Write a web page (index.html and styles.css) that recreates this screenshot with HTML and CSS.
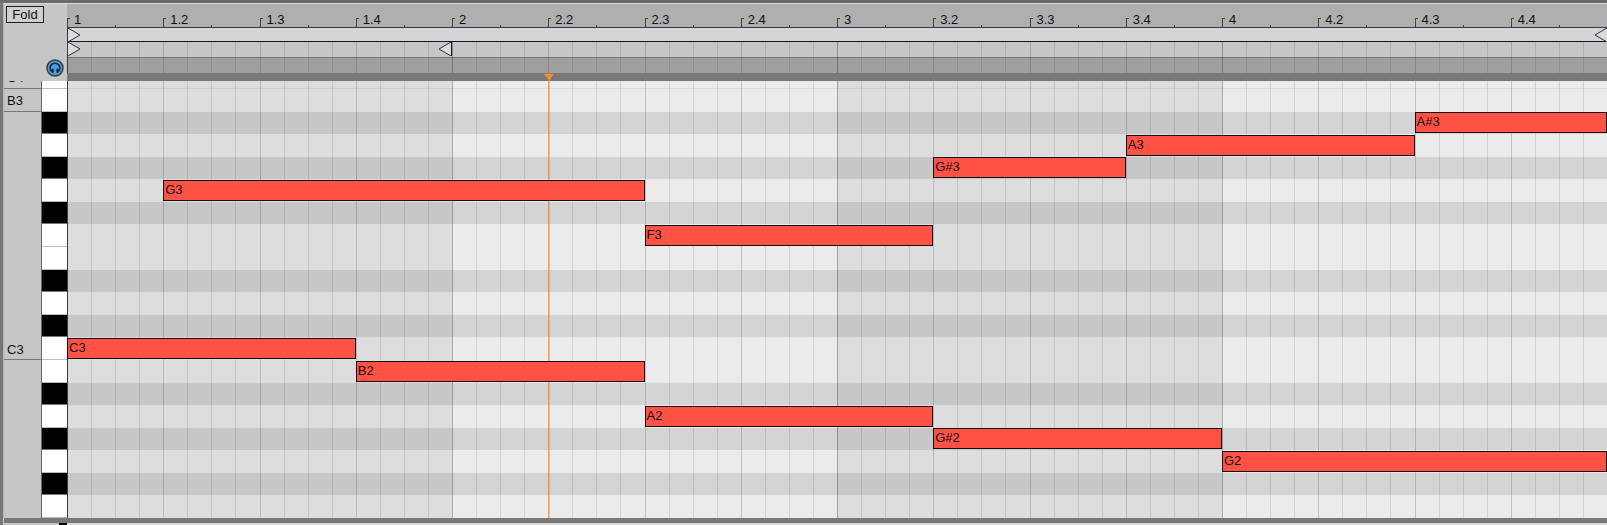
FILE: index.html
```
<!DOCTYPE html>
<html lang="en">
<head>
  <meta charset="utf-8">
  <title>Piano Roll</title>
  <link rel="stylesheet" href="styles.css">
</head>
<body>
  <div class="editor">

    <div class="side">
      <div class="side-top">
        <button class="fold" type="button">Fold</button>
        <button class="preview" type="button" aria-label="Preview">
          <svg viewBox="0 0 18 18">
            <circle cx="9" cy="9" r="8" fill="#4c9bd8" stroke="#3a3a3a" stroke-width="1.5"/>
            <path d="M5.6 12.6A4.9 4.9 0 1 1 12.4 12.6" fill="none" stroke="#12283c" stroke-width="1.5"/>
            <path d="M6.6 9.8v4M11.4 9.8v4" stroke="#12283c" stroke-width="2"/>
          </svg>
        </button>
      </div>

      <div class="piano">
        <div class="names">
          <div class="name name-cut"><span>C4</span></div>
          <div class="name name-b">B3</div>
          <div class="name name-c">C3</div>
          <div class="name-rest"></div>
        </div>
        <div class="keys">
          <div class="key cut"></div>
          <div class="key"></div>
          <div class="key black"></div>
          <div class="key"></div>
          <div class="key black"></div>
          <div class="key"></div>
          <div class="key black"></div>
          <div class="key"></div>
          <div class="key"></div>
          <div class="key black"></div>
          <div class="key"></div>
          <div class="key black"></div>
          <div class="key"></div>
          <div class="key"></div>
          <div class="key black"></div>
          <div class="key"></div>
          <div class="key black"></div>
          <div class="key"></div>
          <div class="key black"></div>
          <div class="key"></div>
        </div>
      </div>
    </div>

    <div class="main">
      <div class="ruler">
        <div class="tick">1</div>
        <div class="tick">1.2</div>
        <div class="tick">1.3</div>
        <div class="tick">1.4</div>
        <div class="tick">2</div>
        <div class="tick">2.2</div>
        <div class="tick">2.3</div>
        <div class="tick">2.4</div>
        <div class="tick">3</div>
        <div class="tick">3.2</div>
        <div class="tick">3.3</div>
        <div class="tick">3.4</div>
        <div class="tick">4</div>
        <div class="tick">4.2</div>
        <div class="tick">4.3</div>
        <div class="tick">4.4</div>
      </div>

      <div class="region">
        <svg class="marker" viewBox="0 0 13 14"><path d="M0 0L12 7L0 14"/></svg>
        <svg class="marker" viewBox="0 0 13 14"><path d="M13 0L1 7L13 14"/></svg>
      </div>

      <div class="loop">
        <div class="loop-range">
          <svg class="marker" viewBox="0 0 13 14"><path d="M0 0L12 7L0 14"/></svg>
          <svg class="marker" viewBox="0 0 13 14"><path d="M13 0L1 7L13 14"/></svg>
        </div>
      </div>

      <div class="scrub"></div>

      <div class="rows">
        <div class="row cut"></div>
        <div class="row"></div>
        <div class="row black"><div class="note a-sharp-3">A#3</div></div>
        <div class="row"><div class="note a-3">A3</div></div>
        <div class="row black"><div class="note g-sharp-3">G#3</div></div>
        <div class="row"><div class="note g-3">G3</div></div>
        <div class="row black"></div>
        <div class="row"><div class="note f-3">F3</div></div>
        <div class="row"></div>
        <div class="row black"></div>
        <div class="row"></div>
        <div class="row black"></div>
        <div class="row"><div class="note c-3">C3</div></div>
        <div class="row"><div class="note b-2">B2</div></div>
        <div class="row black"></div>
        <div class="row"><div class="note a-2">A2</div></div>
        <div class="row black"><div class="note g-sharp-2">G#2</div></div>
        <div class="row"><div class="note g-2">G2</div></div>
        <div class="row black"></div>
        <div class="row"></div>
      </div>

      <div class="shade">
        <div class="bar dark"></div>
        <div class="bar"></div>
        <div class="bar dark"></div>
        <div class="bar"></div>
      </div>

      <div class="lines">
        <div class="beat bar-start"><i></i><i></i><i></i><i></i></div>
        <div class="beat"><i></i><i></i><i></i><i></i></div>
        <div class="beat"><i></i><i></i><i></i><i></i></div>
        <div class="beat"><i></i><i></i><i></i><i></i></div>
        <div class="beat bar-start"><i></i><i></i><i></i><i></i></div>
        <div class="beat"><i></i><i></i><i></i><i></i></div>
        <div class="beat"><i></i><i></i><i></i><i></i></div>
        <div class="beat"><i></i><i></i><i></i><i></i></div>
        <div class="beat bar-start"><i></i><i></i><i></i><i></i></div>
        <div class="beat"><i></i><i></i><i></i><i></i></div>
        <div class="beat"><i></i><i></i><i></i><i></i></div>
        <div class="beat"><i></i><i></i><i></i><i></i></div>
        <div class="beat bar-start"><i></i><i></i><i></i><i></i></div>
        <div class="beat"><i></i><i></i><i></i><i></i></div>
        <div class="beat"><i></i><i></i><i></i><i></i></div>
        <div class="beat"><i></i><i></i><i></i><i></i></div>
      </div>

      <div class="divider"></div>

      <div class="playhead">
        <svg viewBox="0 0 10 6"><path d="M0 0H10L5 6Z" fill="#ff8e2b"/></svg>
      </div>
    </div>

    <div class="footer"></div>
    <div class="next-side"></div>
    <div class="next-lane"></div>
  </div>
</body>
</html>
```

FILE: styles.css
```
*{ box-sizing: border-box; }
body{ margin: 0; background-color: #c6c6c6; color: #111; font-family: "Liberation Sans", Arial, sans-serif; font-size: 13px; }

.editor{ display: grid; grid-template-columns: 64px 1fr; border-top: 3px solid #6b6b6b; border-left: 3px solid #777; }

/* left side */
.side{ background-color: #c6c6c6; border-left: 1px solid #b4b4b4; border-top: 1px solid #ddd; }
.side-top{ display: flex; flex-direction: column; justify-content: space-between; height: 77px; padding: 2px 3px 4px 2px; }
.fold{ align-self: flex-start; width: 38px; height: 17px; padding: 0; background-color: #cfcfcf; border: 1px solid #222; color: #111; font: inherit; line-height: 15px; }
.preview{ align-self: flex-end; width: 18px; height: 18px; padding: 0; background: none; border: 0; }
.preview svg{ display: block; width: 18px; height: 18px; }

.piano{ display: grid; grid-template-columns: 37px 1fr; }
.names{ display: flex; flex-direction: column; }
.name{ display: flex; align-items: flex-end; padding-left: 3px; border-bottom: 1px solid #777; line-height: 21px; }
.name-cut{ height: 8px; overflow: hidden; padding-bottom: 6px; line-height: 8px; }
.name-b{ height: 23px; }
.name-c{ height: 248px; line-height: 19px; }
.name-rest{ flex: 1; }

.keys{ border-left: 1px solid #666; }
.key{ height: 23px; background-color: #fff; border-bottom: 1px solid #bbb; }
.key.cut{ height: 8px; }
.key.black{ height: 22px; background-color: #000; border-bottom-color: #777; }

/* timeline and notes, one layer over the other */
.main{ display: grid; grid-template-columns: repeat(64, 1fr); grid-template-rows: 25px 14px 16px 15px 8px auto; min-width: 0; }
.main > div{ grid-column: 1 / -1; min-width: 0; }

.ruler{ grid-row: 1; display: flex; align-items: flex-end; background-color: #afafaf; border-top: 1px solid #d8d8d8; border-bottom: 1px solid #333a48; }
.tick{ position: relative; flex: 1 1 0; height: 15px; padding-left: 7px; line-height: 15px; }
.tick::before{ content: ""; position: absolute; left: 0; bottom: 0; width: 2px; height: 8px; border-left: 1px solid #444; border-top: 1px solid #444; }
.tick::after{ content: ""; position: absolute; left: 50%; bottom: 0; width: 1px; height: 2px; background-color: #444; }

.marker{ display: block; width: 13px; height: 14px; }
.marker path{ fill: #dcdcdc; stroke: #2b3047; stroke-width: 1; }
.region{ grid-row: 2; display: flex; justify-content: space-between; background-color: #d5d5d5; border-left: 1px solid #2b3047; border-bottom: 1px solid #11162e; }
.loop{ grid-row: 3; background-color: #c6c6c6; border-bottom: 1px solid #747474; }
.loop-range{ display: flex; justify-content: space-between; width: 25%; border-right: 1px solid #11162e; border-left: 1px solid #2b3047; }
.scrub{ grid-row: 4; background-color: #9f9f9f; }
.divider{ grid-row: 5; background-color: #797979; }

.rows{ grid-row: 6; }
.row{ display: grid; grid-template-columns: repeat(64, 1fr); height: 23px; background-color: #ebebeb; }
.row.cut{ height: 8px; border-bottom: 1px solid #ddd; }
.row.black{ height: 22px; background-color: #d4d4d4; }

.shade{ grid-row: 6; display: flex; }
.bar{ flex: 1; }
.bar.dark{ background-color: rgba(0, 0, 0, 0.06); }

.lines{ grid-row: 3 / 7; display: flex; }
.beat{ display: flex; flex: 1 1 0; }
.beat i{ flex: 1 1 0; border-left: 1px solid rgba(0, 0, 0, 0.1); }
.beat i:first-child{ border-left-color: rgba(0, 0, 0, 0.17); }
.bar-start i:first-child{ border-left-color: rgba(0, 0, 0, 0.27); }
.beat:first-child i:first-child{ border-left-color: #333a48; }

.note{ z-index: 2; height: 21px; margin-top: 1px; padding-left: 1px; background-color: #ff5245; border: 1px solid #111; line-height: 18px; }
.row.black .note{ height: 21px; margin-top: 0; }
.a-sharp-3{ grid-column: 57 / 65; }
.a-3{ grid-column: 45 / 57; }
.g-sharp-3{ grid-column: 37 / 45; }
.g-3{ grid-column: 5 / 25; }
.f-3{ grid-column: 25 / 37; }
.c-3{ grid-column: 1 / 13; }
.b-2{ grid-column: 13 / 25; }
.a-2{ grid-column: 25 / 37; }
.g-sharp-2{ grid-column: 37 / 49; }
.g-2{ grid-column: 49 / 65; }

.main > .playhead{ grid-row: 5 / 7; grid-column: 21 / 22; z-index: 1; border-left: 2px solid rgba(255, 142, 43, 0.55); }
.playhead svg{ display: block; width: 10px; height: 6px; margin: 1px 0 0 -6px; }

/* top edge of the lane below */
.footer{ grid-column: 1 / -1; height: 5px; margin-left: 1px; background-color: #797979; }
.next-side{ height: 2px; border-right: 8px solid #000; background-color: #c6c6c6; }
.next-lane{ height: 2px; background-color: #d9d9d9; }
```
